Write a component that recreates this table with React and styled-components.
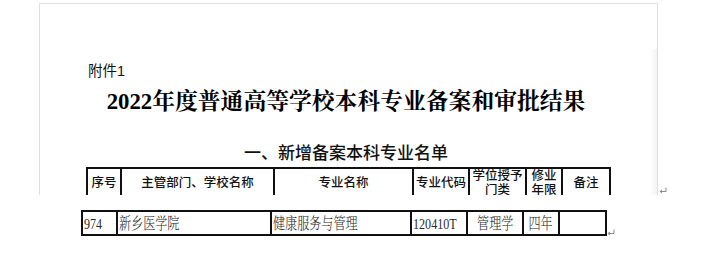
import React from "react";
import styled, { createGlobalStyle } from "styled-components";

const Global = createGlobalStyle`
  html, body { margin: 0; padding: 0; background: #fff; }
  #root { width: 704px; height: 280px; }
`;

const SANS = `"Liberation Sans", "Noto Sans CJK SC", sans-serif`;
const SERIF = `"Liberation Serif", "Noto Serif CJK SC", "Noto Sans CJK SC", serif`;

const Canvas = styled.div`
  width: 704px;
  height: 280px;
  overflow: hidden;
  background: #fff;
`;

const Row = styled.div`
  display: flex;
  align-items: flex-end;
  margin: ${(p) => p.$margin};
`;

const Frame = styled.div`
  box-sizing: border-box;
  width: 619px;
  height: 192px;
  border: 1px solid #e0e0e0;
  border-bottom: none;
  overflow: hidden;
  padding-top: 57px;
  background:
    linear-gradient(to left, #f2f2f2, rgba(255, 255, 255, 0)) right 0 top 45px / 7px 100% no-repeat,
    #fff;
`;

const Label = styled.div`
  margin-left: 48px;
  font-family: ${SANS};
  font-size: 14.5px;
  line-height: 20px;
  color: #111;
`;

const Title = styled.h1`
  margin: 6px 0 0;
  padding-right: 5px;
  text-align: center;
  font-family: ${SERIF};
  font-weight: 700;
  font-size: 22.8px;
  line-height: 30px;
  color: #000;
  white-space: nowrap;
`;

const Heading = styled.h2`
  margin: 26px 0 0;
  padding-right: 5px;
  text-align: center;
  font-family: ${SANS};
  font-weight: 500;
  font-size: 17px;
  line-height: 22px;
  color: #111;
`;

const Grid = styled.div`
  display: grid;
  width: max-content;
  grid-template-columns: ${(p) => p.$cols.map((c) => `${c}px`).join(" ")};
  border-top: 2px solid #111;
  border-left: 2px solid #111;
  border-bottom: ${(p) => (p.$closed ? "2px solid #111" : "none")};
  margin: ${(p) => p.$margin};
`;

const HeadCell = styled.div`
  box-sizing: border-box;
  height: 28px;
  border-right: 2px solid #111;
  display: flex;
  align-items: center;
  justify-content: center;
  text-align: center;
  font-family: ${SANS};
  font-weight: 500;
  font-size: 12.5px;
  line-height: 14px;
  color: #111;
  white-space: pre-line;
`;

const BodyCell = styled.div`
  box-sizing: border-box;
  height: 22px;
  border-right: 2px solid #111;
  display: flex;
  align-items: center;
  justify-content: ${(p) => (p.$center ? "center" : "flex-start")};
  padding-left: ${(p) => (p.$center ? 0 : 1)}px;
  overflow: visible;
  white-space: nowrap;
`;

const Squeeze = styled.span`
  display: inline-block;
  transform: scaleX(0.78);
  transform-origin: ${(p) => (p.$center ? "center" : "left")} center;
  font-family: ${SERIF};
  font-weight: 300;
  font-size: 15.5px;
  line-height: 17px;
  color: #2a2a2a;
`;

const Mark = styled.svg`
  flex: none;
  display: block;
  margin-left: ${(p) => p.$ml}px;
  margin-bottom: ${(p) => p.$mb}px;
`;

const ReturnMark = (props) => (
  <Mark width="8" height="7" viewBox="0 0 8 7" {...props}>
    <path d="M7 0.5 V4.5 H1.5" fill="none" stroke="#8a8a8a" strokeWidth="1" />
    <path d="M0.5 4.5 L3 2.5 L3 6.5 Z" fill="#8a8a8a" />
  </Mark>
);

const headCols = [34, 153, 139, 56, 57, 36, 48];
const bodyCols = [35, 154, 140, 56, 56, 36, 47];

const headers = ["序号", "主管部门、学校名称", "专业名称", "专业代码", "学位授予\n门类", "修业\n年限", "备注"];

const row = [
  { text: "974" },
  { text: "新乡医学院" },
  { text: "健康服务与管理" },
  { text: "120410T" },
  { text: "管理学", center: true },
  { text: "四年", center: true },
  { text: "" },
];

export default function App() {
  return (
    <Canvas>
      <Global />
      <Row $margin="3px 0 0 39px">
        <Frame>
          <Label>附件1</Label>
          <Title>2022年度普通高等学校本科专业备案和审批结果</Title>
          <Heading>一、新增备案本科专业名单</Heading>
          <Grid $cols={headCols} $margin="2px 0 0 46px">
            {headers.map((h) => (
              <HeadCell key={h}>{h}</HeadCell>
            ))}
          </Grid>
        </Frame>
        <ReturnMark $ml={1} $mb={1} />
      </Row>
      <Row $margin="15px 0 0 81px">
        <Grid $cols={bodyCols} $closed $margin="0">
          {row.map((c, i) => (
            <BodyCell key={i} $center={c.center}>
              <Squeeze $center={c.center}>{c.text}</Squeeze>
            </BodyCell>
          ))}
        </Grid>
        <ReturnMark $ml={0} $mb={0} />
      </Row>
    </Canvas>
  );
}
